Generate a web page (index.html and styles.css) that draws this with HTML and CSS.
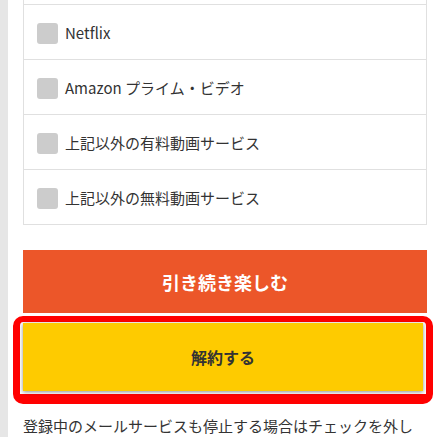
FILE: index.html
```html
<!DOCTYPE html>
<html lang="ja">
<head>
  <meta charset="UTF-8" />
  <meta name="viewport" content="width=device-width, initial-scale=1.0"/>
  <title>解約手続き</title>
  <link rel="stylesheet" href="styles.css">
</head>
<body>
  <div class="page">
    <ul class="service-list">
      <li class="service-item">
        <span class="check"></span>
        <span class="service-name">Netflix</span>
      </li>
      <li class="service-item">
        <span class="check"></span>
        <span class="service-name">Amazon プライム・ビデオ</span>
      </li>
      <li class="service-item">
        <span class="check"></span>
        <span class="service-name">上記以外の有料動画サービス</span>
      </li>
      <li class="service-item">
        <span class="check"></span>
        <span class="service-name">上記以外の無料動画サービス</span>
      </li>
    </ul>

    <button type="button" class="btn-continue">引き続き楽しむ</button>

    <div class="cancel-mark">
      <button type="button" class="btn-cancel">解約する</button>
    </div>

    <p class="note">登録中のメールサービスも停止する場合はチェックを外してください。</p>
  </div>
</body>
</html>
```

FILE: styles.css
```css
body {
  margin: 0;
  padding: 0;
  background-color: #e6e6e6;
  font-family: "Noto Sans CJK JP", "Liberation Sans", sans-serif;
  color: #333;
  overflow: hidden;
}
.page {
  margin-left: 8px;
  background-color: #fff;
  padding: 0 7px 20px 15px;
  min-height: 437px;
}
.service-list {
  list-style: none;
  margin: 0;
  padding: 4px 0 0;
  border-left: 1px solid #e0e0e0;
  border-right: 1px solid #e0e0e0;
  border-bottom: 1px solid #e0e0e0;
}
.service-item {
  display: flex;
  align-items: center;
  height: 54px;
  padding: 0 13px;
  border-top: 1px solid #e0e0e0;
  font-size: 15px;
}
.check {
  width: 21px;
  height: 21px;
  margin-top: 2px;
  margin-right: 7px;
  border-radius: 3px;
  background-color: #cccccc;
  flex-shrink: 0;
}
.service-name {
  color: #333;
}
.btn-continue {
  display: block;
  width: 100%;
  height: 63px;
  margin-top: 25px;
  border: none;
  background-color: #ec5629;
  color: #fff;
  font-family: inherit;
  font-size: 18px;
  font-weight: bold;
  cursor: pointer;
}
.cancel-mark {
  margin: 3px -6px 0 -10px;
  padding: 1px 3px 3px 3px;
  border-style: solid;
  border-color: #ff0000;
  border-width: 6px 7px 10px 7px;
  border-radius: 10px;
}
.btn-cancel {
  display: block;
  width: 100%;
  height: 68px;
  border: none;
  background-color: #fecb00;
  box-shadow: 0 1px 4px rgba(0, 0, 0, 0.45);
  color: #333;
  font-family: inherit;
  font-size: 16px;
  font-weight: bold;
  cursor: pointer;
}
.note {
  margin: 10px 0 0;
  font-size: 15px;
  line-height: 24px;
  color: #333;
}
```
